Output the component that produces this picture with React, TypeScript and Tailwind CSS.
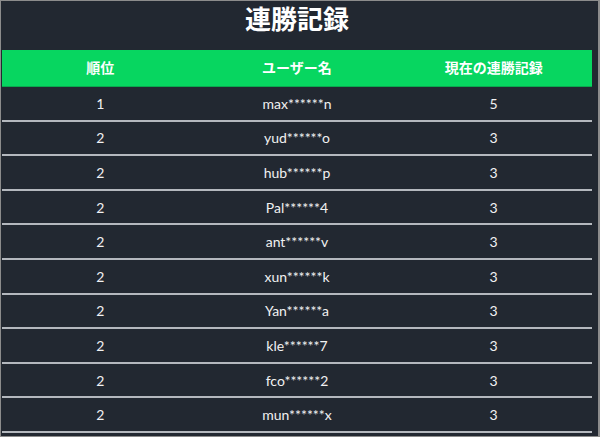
import React from 'react';

const rows = [
  { rank: 1, name: 'max******n', streak: 5 },
  { rank: 2, name: 'yud******o', streak: 3 },
  { rank: 2, name: 'hub******p', streak: 3 },
  { rank: 2, name: 'Pal******4', streak: 3 },
  { rank: 2, name: 'ant******v', streak: 3 },
  { rank: 2, name: 'xun******k', streak: 3 },
  { rank: 2, name: 'Yan******a', streak: 3 },
  { rank: 2, name: 'kle******7', streak: 3 },
  { rank: 2, name: 'fco******2', streak: 3 },
  { rank: 2, name: 'mun******x', streak: 3 },
];

const App: React.FC = () => {
  return (
    <div
      className="w-[600px] h-[437px] overflow-hidden bg-[#222831] border border-[#8c8c8c] border-r-2"
      style={{ fontFamily: '"Lato", "Noto Sans CJK JP", sans-serif' }}
    >
      <div className="w-[590px] ml-px">
        <h1 className="h-[49px] flex items-start justify-center text-[26px] leading-[36px] font-bold text-white">
          連勝記録
        </h1>
        <table className="w-full border-collapse table-fixed">
          <thead>
            <tr className="h-[36px] bg-[#07d660] text-white text-[14px] font-bold border-b border-[#0aa84e]">
              <th className="font-bold">順位</th>
              <th className="font-bold">ユーザー名</th>
              <th className="font-bold">現在の連勝記録</th>
            </tr>
          </thead>
          <tbody className="text-[14px] text-[#f1f1f1]">
            {rows.map((r, i) => (
              <tr key={i} className="h-[34.6px] border-b-2 border-[#b4b8be]">
                <td className="text-center">{r.rank}</td>
                <td className="text-center">{r.name}</td>
                <td className="text-center">{r.streak}</td>
              </tr>
            ))}
          </tbody>
        </table>
      </div>
    </div>
  );
};

export default App;
